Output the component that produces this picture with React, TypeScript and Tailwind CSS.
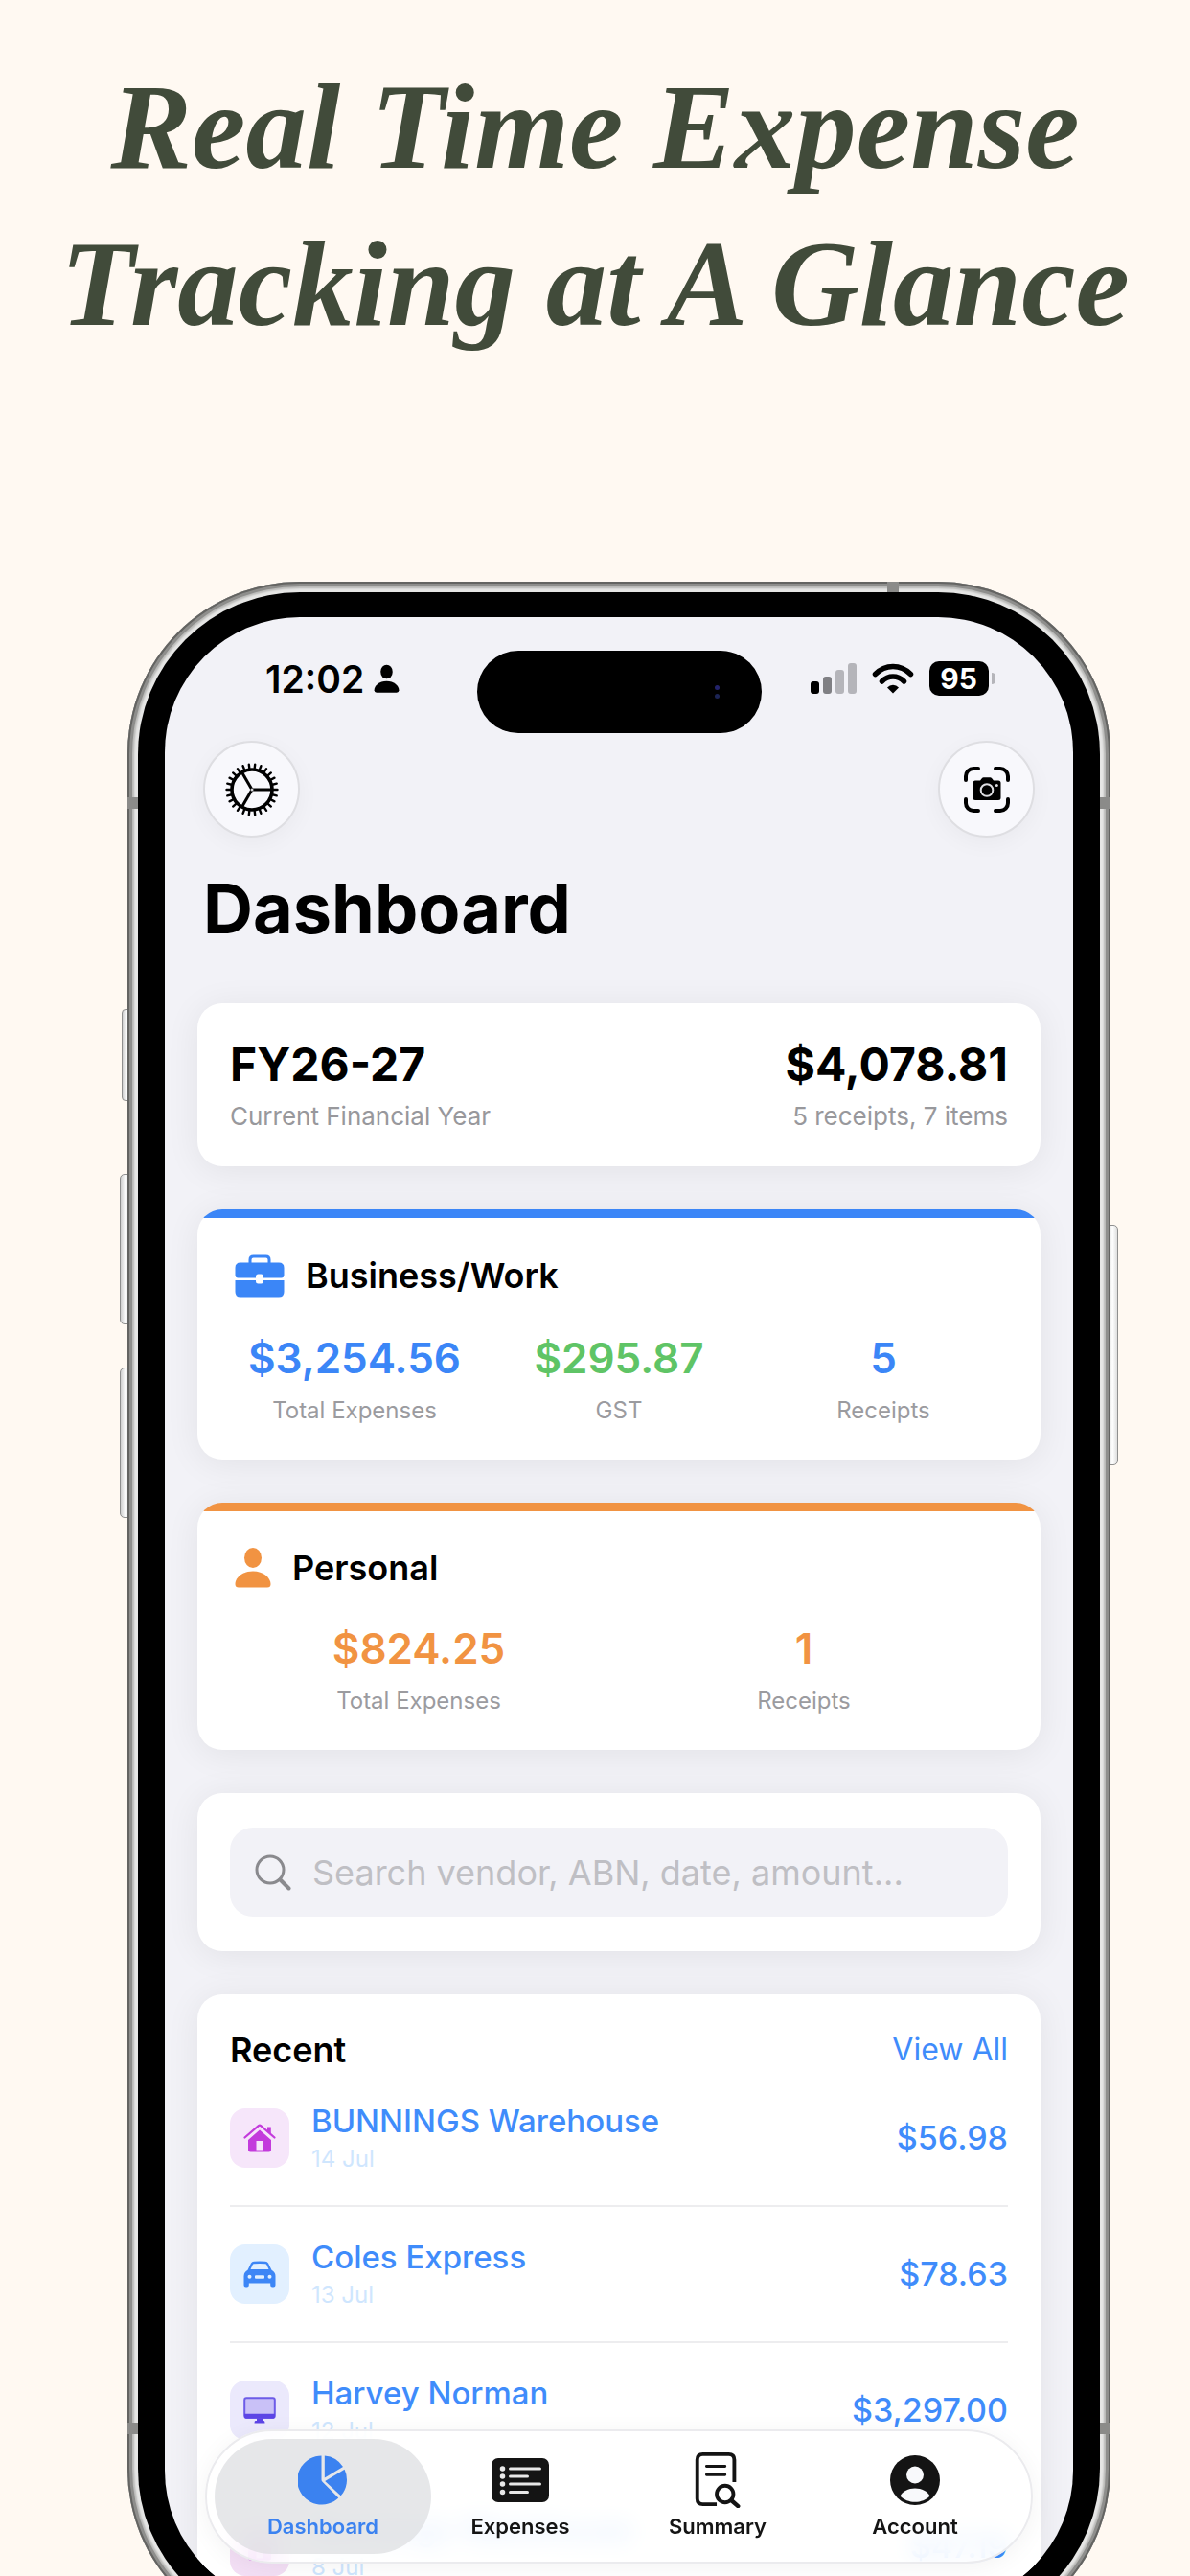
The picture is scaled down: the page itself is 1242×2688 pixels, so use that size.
import { FC, ReactNode } from 'react';
import clsx from 'clsx';

type IconProps = {
    className?: string;
};

const GEAR_TEETH = Array.from({ length: 26 }, (_, i) => (i * 360) / 26);

const GearIcon: FC<IconProps> = ({ className }) => (
    <svg viewBox="0 0 56 56" fill="none" stroke="currentColor" className={className} aria-hidden={true}>
        <circle cx="28" cy="28" r="21" strokeWidth="3.6" />
        {GEAR_TEETH.map((angle) => (
            <path key={angle} d="M49 28h5.5" strokeWidth="2.4" strokeLinecap="round" transform={`rotate(${angle} 28 28)`} />
        ))}
        {[0, 120, 240].map((angle) => (
            <path key={angle} d="M28 28h20" strokeWidth="3" transform={`rotate(${angle} 28 28)`} />
        ))}
        <circle cx="28" cy="28" r="1.5" fill="#d4d4d8" stroke="none" />
    </svg>
);

const ScanIcon: FC<IconProps> = ({ className }) => (
    <svg viewBox="0 0 48 48" fill="none" className={className} aria-hidden={true}>
        <path
            d="M2 14V10a8 8 0 0 1 8-8h5M33 2h5a8 8 0 0 1 8 8v4M46 34v4a8 8 0 0 1-8 8h-5M15 46h-5a8 8 0 0 1-8-8v-4"
            stroke="currentColor"
            strokeWidth="4"
            strokeLinecap="round"
        />
        <path
            d="M12 14.5h5l2-2.5q.6-.7 1.6-.7h6.8q1 0 1.6.7l2 2.5h5q2.5 0 2.5 2.5v15.5q0 2.5-2.5 2.5H12q-2.5 0-2.5-2.5V17q0-2.5 2.5-2.5z"
            fill="currentColor"
        />
        <circle cx="24" cy="24.5" r="6.3" stroke="#dcdce0" strokeWidth="2" />
        <circle cx="34.3" cy="19.5" r="1.5" fill="#dcdce0" />
    </svg>
);

const PersonIcon: FC<IconProps> = ({ className }) => (
    <svg viewBox="0 0 38 43" fill="currentColor" className={className} aria-hidden={true}>
        <ellipse cx="19" cy="11.5" rx="9" ry="10.5" />
        <path d="M4 42.5q-3.5 0-3.5-3.5C.5 32.5 8 25.5 19 25.5S37.5 32.5 37.5 39q0 3.5-3.5 3.5z" />
    </svg>
);

const BriefcaseIcon: FC<IconProps> = ({ className }) => (
    <svg viewBox="0 0 52 46" className={className} aria-hidden={true}>
        <path d="M16 10V6.5Q16 3 19.5 3h13Q36 3 36 6.5V10" fill="none" stroke="currentColor" strokeWidth="3" />
        <path
            d="M6 9.5h40q5.5 0 5.5 5.5v7.5q0 3-3 3H30V24q0-2.5-2.5-2.5h-3Q22 21.5 22 24v1.5H3.5q-3 0-3-3V15Q.5 9.5 6 9.5z"
            fill="currentColor"
        />
        <path d="M.5 28H22v1q0 2.5 2.5 2.5h3Q30 31.5 30 29v-1h21.5v12q0 5.5-5.5 5.5H6Q.5 45.5.5 40z" fill="currentColor" />
    </svg>
);

const SearchIcon: FC<IconProps> = ({ className }) => (
    <svg viewBox="0 0 38 38" fill="none" stroke="currentColor" strokeLinecap="round" className={className} aria-hidden={true}>
        <circle cx="16" cy="16" r="14" strokeWidth="3" />
        <path d="M26.5 26.5 35.5 35.5" strokeWidth="4" />
    </svg>
);

const HouseIcon: FC<IconProps> = ({ className }) => (
    <svg viewBox="0 0 34 30" fill="currentColor" className={className} aria-hidden={true}>
        <path d="M1.5 14.5 15.8 2.2q1.2-1 2.4 0L32.5 14.5" fill="none" stroke="currentColor" strokeWidth="2.2" strokeLinecap="round" />
        <path d="M25 3.5h3.8v8L25 8.2z" />
        <path d="M17 6.5 29 17v10q0 2.5-2.5 2.5h-19Q5 29.5 5 27V17zM13.5 18v9.500h7V18z" fillRule="evenodd" />
    </svg>
);

const CarIcon: FC<IconProps> = ({ className }) => (
    <svg viewBox="0 0 34 28" fill="currentColor" className={className} aria-hidden={true}>
        <path
            d="M8 2.5Q9 .8 11 .7q6-.5 12 0 2 .1 3 1.8l3.5 7.3Q33.5 12 33.5 16v9.5q0 2-2 2h-1.3q-2 0-2-2V23.5H5.8v2q0 2-2 2H2.5q-2 0-2-2V16q0-4 4-6.2zM9.8 4 7.5 9h19L24.2 4q-.4-.7-1.2-.8-6-.5-12 0-.8.1-1.2.8zM6.5 18.8a2 2 0 1 0 0-4 2 2 0 0 0 0 4zM27.5 18.8a2 2 0 1 0 0-4 2 2 0 0 0 0 4zM13 15.2q-1 0-1 1v1.6q0 1 1 1h8q1 0 1-1v-1.6q0-1-1-1z"
            fillRule="evenodd"
        />
    </svg>
);

const DisplayIcon: FC<IconProps> = ({ className }) => (
    <svg viewBox="0 0 34 28" className={className} aria-hidden={true}>
        <rect x="1.2" y="1.2" width="31.6" height="20.6" rx="2" fill="#c9c1f7" stroke="#6d5ce8" strokeWidth="2" />
        <path d="M1 17.8h32v2.4q0 2.6-2.6 2.6H3.6Q1 22.8 1 20.2z" fill="#5c45e6" />
        <path d="M14 22.5h6v2.5h1.5q1 0 1 2.5h-11q0-2.5 1-2.5H14z" fill="#5c45e6" />
    </svg>
);

const PieIcon: FC<IconProps> = ({ className }) => (
    <svg viewBox="0 0 52 52" fill="currentColor" className={className} aria-hidden={true}>
        <path d="M24.5.5V25.5q0 1.5 1 2.3L42.3 44.5A25.5 25.5 0 1 1 24.5.5z" />
        <path d="M27.8.5A25.5 25.5 0 0 1 47 12L27.8 23.5z" />
        <path d="M48.6 14.8A25.5 25.5 0 0 1 44.7 42.3L28.2 27z" />
    </svg>
);

const ListIcon: FC<IconProps> = ({ className }) => (
    <svg viewBox="0 0 60 48" className={className} aria-hidden={true}>
        <rect x="0" y="1" width="60" height="46" rx="7" fill="currentColor" />
        <g fill="none" stroke="#e8e8e8" strokeLinecap="round" strokeWidth="3">
            <path d="M19.5 12h31M19.5 20h18M19.5 28h31M19.5 36.5h18" />
            <path d="M11.5 12h.01M11.5 20h.01M11.5 28h.01M11.5 36.5h.01" strokeWidth="5.5" />
        </g>
    </svg>
);

const SummaryIcon: FC<IconProps> = ({ className }) => (
    <svg viewBox="0 0 48 60" fill="none" stroke="currentColor" className={className} aria-hidden={true}>
        <path d="M42 32V8q0-6-6-6H8Q2 2 2 8v42q0 6 6 6h15" strokeWidth="4" />
        <path d="M12 15h20M12 24h20" strokeWidth="3" strokeLinecap="round" />
        <circle cx="32" cy="45" r="9" strokeWidth="4" />
        <path d="M39 52l7 6" strokeWidth="4.5" strokeLinecap="round" />
    </svg>
);

const AccountIcon: FC<IconProps> = ({ className }) => (
    <svg viewBox="0 0 52 52" className={className} aria-hidden={true}>
        <circle cx="26" cy="26" r="26" fill="currentColor" />
        <circle cx="26" cy="20.5" r="9" fill="#f8f9fb" />
        <path d="M10.5 42.5C13 37.5 19 34.5 26 34.5s13 3 15.5 8C37.5 46.5 32 48.8 26 48.8s-11.5-2.3-15.5-6.3z" fill="#f8f9fb" />
    </svg>
);

const WifiIcon: FC<IconProps> = ({ className }) => (
    <svg viewBox="0 0 44 32" fill="none" stroke="currentColor" strokeWidth="5.5" className={className} aria-hidden={true}>
        <path d="M3.5 11.5Q11.5 3.5 22 3.5T40.5 11.5" strokeLinecap="round" />
        <path d="M10.5 19Q15.5 14 22 14T33.5 19" strokeLinecap="round" />
        <path d="M22 31.5l-6-6q2.5-2.8 6-2.8t6 2.8z" fill="currentColor" stroke="none" />
    </svg>
);

const StatusBar: FC = () => (
    <div className="grid grid-cols-[1fr_297px_1fr] items-start pt-[35px]">
        <div className="flex h-[58px] items-center gap-[10px] pl-[105px]">
            <span className="text-[39px] leading-none font-semibold">12:02</span>
            <PersonIcon className="h-[30px] w-[27px]" />
        </div>
        <div className="flex h-[86px] items-center justify-end rounded-full bg-black pr-11">
            <div className="flex flex-col gap-1">
                <span className="size-[5px] rounded-full bg-[#23236b]" />
                <span className="size-[5px] rounded-full bg-[#1c2454]" />
            </div>
        </div>
        <div className="flex h-[58px] items-center gap-4 pl-[51px]">
            <div className="flex items-end gap-1">
                <span className="h-[13px] w-[9px] rounded-[3px] bg-black" />
                <span className="h-[18px] w-[9px] rounded-[3px] bg-[#808084]" />
                <span className="h-[25px] w-[9px] rounded-[3px] bg-[#b5b5ba]" />
                <span className="h-[32px] w-[9px] rounded-[3px] bg-[#b5b5ba]" />
            </div>
            <WifiIcon className="h-[32px] w-[44px]" />
            <div className="flex items-center gap-[3px]">
                <span className="flex h-[36px] w-[62px] items-center justify-center rounded-[10px] bg-black text-[30px] leading-none font-bold text-white">
                    95
                </span>
                <span className="h-3 w-1 rounded-r-full bg-[#b5b5ba]" />
            </div>
        </div>
    </div>
);

type CardProps = {
    className?: string;
    children: ReactNode;
};

const Card: FC<CardProps> = ({ className, children }) => (
    <section className={clsx('overflow-hidden rounded-[26px] bg-white px-[34px] shadow-[0_4px_36px_rgba(0,0,0,0.07)]', className)}>
        {children}
    </section>
);

type StatProps = {
    value: string;
    label: string;
    color: string;
};

const Stat: FC<StatProps> = ({ value, label, color }) => (
    <div className="flex flex-col items-center gap-[14px]">
        <span className={clsx('text-[44px] leading-[52px] font-semibold', color)}>{value}</span>
        <span className="text-[24px] leading-[30px] text-[#9b9b9f]">{label}</span>
    </div>
);

type Expense = {
    vendor: string;
    date: string;
    amount: string;
    icon: ReactNode;
    tile: string;
};

const expenses: Expense[] = [
    {
        vendor: 'BUNNINGS Warehouse',
        date: '14 Jul',
        amount: '$56.98',
        icon: <HouseIcon className="w-[34px]" />,
        tile: 'bg-[#f6e6fa] text-[#c33bdc]',
    },
    {
        vendor: 'Coles Express',
        date: '13 Jul',
        amount: '$78.63',
        icon: <CarIcon className="w-[34px]" />,
        tile: 'bg-[#e2f0ff] text-[#3d86f6]',
    },
    {
        vendor: 'Harvey Norman',
        date: '12 Jul',
        amount: '$3,297.00',
        icon: <DisplayIcon className="w-[34px]" />,
        tile: 'bg-[#ebe9fc]',
    },
    {
        vendor: 'Bunnings Warehouse',
        date: '8 Jul',
        amount: '$47.19',
        icon: <HouseIcon className="w-[34px]" />,
        tile: 'bg-[#f3dff5] text-[#c33bdc]',
    },
];

const ExpenseRow: FC<{ expense: Expense }> = ({ expense }) => (
    <li className="border-b-2 border-[#ededef] last:border-b-0">
        <a href="#expense" className="flex h-[140px] items-center gap-[23px] text-[#3f8cfb]">
            <span className={clsx('flex size-[62px] shrink-0 items-center justify-center rounded-[16px]', expense.tile)}>
                {expense.icon}
            </span>
            <span className="flex flex-1 flex-col gap-1">
                <span className="text-[33px] leading-[40px] font-medium">{expense.vendor}</span>
                <span className="text-[24px] leading-[32px] text-[#cfe6fe]">{expense.date}</span>
            </span>
            <span className="text-[34px] leading-[40px] font-medium">{expense.amount}</span>
        </a>
    </li>
);

const tabs = [
    { label: 'Dashboard', icon: <PieIcon className="size-[52px]" />, active: true },
    { label: 'Expenses', icon: <ListIcon className="h-[48px] w-[60px]" />, active: false },
    { label: 'Summary', icon: <SummaryIcon className="h-[58px] w-[48px]" />, active: false },
    { label: 'Account', icon: <AccountIcon className="size-[52px]" />, active: false },
];

const TabBar: FC = () => (
    <nav className="absolute inset-x-[42px] bottom-[44px] flex h-[140px] rounded-full border-2 border-[#ebebee] bg-white/85 px-[18px] py-2 shadow-[0_4px_24px_rgba(0,0,0,0.05)] backdrop-blur-md">
        {tabs.map((tab) => (
            <button
                key={tab.label}
                type="button"
                aria-current={tab.active ? 'page' : undefined}
                className={clsx(
                    'relative flex flex-1 flex-col items-center',
                    tab.active ? 'text-[#3b82f0]' : 'text-[#141414]'
                )}
            >
                {tab.active && <span className="absolute -inset-x-[10px] inset-y-0 rounded-full bg-[#d9dadd]/65" />}
                <span className="relative flex h-[86px] items-center justify-center">{tab.icon}</span>
                <span className="relative -mt-2 text-[22px] leading-[26px] font-semibold">{tab.label}</span>
            </button>
        ))}
    </nav>
);

const roundButton =
    'flex size-[101px] items-center justify-center rounded-full border-2 border-[#dedee2] bg-[#f8f8fc] shadow-[0_6px_24px_rgba(0,0,0,0.04)]';

const Dashboard: FC = () => (
    <div className="relative h-full overflow-hidden rounded-[141px] bg-[#f2f2f7] text-black">
        <StatusBar />

        <header className="px-10 pt-2">
            <div className="flex justify-between">
                <button type="button" aria-label="Settings" className={roundButton}>
                    <GearIcon className="size-[56px]" />
                </button>
                <button type="button" aria-label="Scan receipt" className={roundButton}>
                    <ScanIcon className="size-[48px]" />
                </button>
            </div>
            <h2 className="mt-[29px] text-[72px] leading-[90px] font-bold">Dashboard</h2>
        </header>

        <main className="flex flex-col gap-[45px] px-[34px] pt-[54px]">
            <Card className="flex justify-between py-9">
                <div className="flex flex-col gap-[10px]">
                    <span className="text-[48px] leading-[56px] font-bold">FY26-27</span>
                    <span className="text-[26px] leading-[32px] text-[#98989c]">Current Financial Year</span>
                </div>
                <div className="flex flex-col gap-[10px] text-right">
                    <span className="text-[48px] leading-[56px] font-bold">$4,078.81</span>
                    <span className="text-[26px] leading-[32px] text-[#98989c]">5 receipts, 7 items</span>
                </div>
            </Card>

            <Card className="bg-linear-to-b from-[#3b86f7] from-[9px] to-white to-[9px] pt-[46px] pb-9">
                <h3 className="flex items-center gap-[22px] pl-[5px] text-[36px] leading-[40px] font-semibold">
                    <BriefcaseIcon className="h-[46px] w-[52px] text-[#3b86f7]" />
                    Business/Work
                </h3>
                <div className="mt-[37px] grid grid-cols-3 gap-4">
                    <Stat value="$3,254.56" label="Total Expenses" color="text-[#3b86f7]" />
                    <Stat value="$295.87" label="GST" color="text-[#5fc466]" />
                    <Stat value="5" label="Receipts" color="text-[#3b86f7]" />
                </div>
            </Card>

            <Card className="bg-linear-to-b from-[#f19342] from-[9px] to-white to-[9px] pt-[46px] pb-9">
                <h3 className="flex items-center gap-[22px] pl-[5px] text-[36px] leading-[40px] font-semibold">
                    <PersonIcon className="h-[43px] w-[38px] text-[#f19342]" />
                    Personal
                </h3>
                <div className="mt-[37px] grid grid-cols-2 gap-2 pr-4">
                    <Stat value="$824.25" label="Total Expenses" color="text-[#f19342]" />
                    <Stat value="1" label="Receipts" color="text-[#f19342]" />
                </div>
            </Card>

            <Card className="py-9">
                <label className="flex h-[93px] items-center gap-[22px] rounded-[24px] bg-[#f2f2f7] px-[26px]">
                    <SearchIcon className="size-[38px] shrink-0 text-[#8a8a8e]" />
                    <input
                        type="search"
                        aria-label="Search expenses"
                        placeholder="Search vendor, ABN, date, amount..."
                        className="w-full bg-transparent text-[36px] leading-[44px] outline-none placeholder:text-[#bfbfc4]"
                    />
                </label>
            </Card>

            <Card className="pt-9">
                <div className="flex items-center justify-between leading-[44px]">
                    <h3 className="text-[36px] font-semibold">Recent</h3>
                    <a href="#all" className="text-[32px] text-[#3f8cfb]">
                        View All
                    </a>
                </div>
                <ul>
                    {expenses.map((expense) => (
                        <ExpenseRow key={expense.date} expense={expense} />
                    ))}
                </ul>
            </Card>
        </main>

        <TabBar />
    </div>
);

const sideButton =
    'absolute border border-[#8f8f8f] bg-linear-to-r from-[#cfcfcf] via-white to-[#dedede]';

const Phone: FC = () => (
    <div className="relative h-[2149px] shrink-0">
        {/* hardware buttons */}
        <span className={clsx(sideButton, '-left-[6px] top-[446px] h-[96px] w-[10px] rounded-l-[4px]')} />
        <span className={clsx(sideButton, '-left-[8px] top-[618px] h-[157px] w-[12px] rounded-l-[5px]')} />
        <span className={clsx(sideButton, '-left-[8px] top-[820px] h-[157px] w-[12px] rounded-l-[5px]')} />
        <span className={clsx(sideButton, '-right-[8px] top-[671px] h-[251px] w-[12px] rounded-r-[5px]')} />

        <div className="relative h-full rounded-[180px] bg-[#e6e6e5] p-[11px] shadow-[inset_0_0_0_2px_#646462,inset_0_0_0_5px_#8e8e8c,inset_0_0_2px_7px_#b8b8b6]">
            {/* antenna bands */}
            <span className="absolute top-0 right-[221px] h-[11px] w-[12px] bg-[#8b8b89]" />
            <span className="absolute top-[225px] left-0 h-[12px] w-[11px] bg-[#8b8b89]" />
            <span className="absolute top-[225px] right-0 h-[12px] w-[11px] bg-[#8b8b89]" />
            <span className="absolute bottom-[216px] left-0 h-[12px] w-[11px] bg-[#8b8b89]" />
            <span className="absolute right-0 bottom-[216px] h-[12px] w-[11px] bg-[#8b8b89]" />
            <div className="h-full rounded-[169px] bg-black px-7 py-[26px]">
                <Dashboard />
            </div>
        </div>
    </div>
);

export default function App() {
    return (
        <div className="flex h-screen flex-col overflow-hidden bg-[#fff9f2] pr-[83px] pl-[133px] font-['Inter',sans-serif]">
            <h1 className="-mr-[83px] -ml-[133px] pt-[50px] text-center font-['Liberation_Serif',serif] text-[127px] leading-[164px] font-bold text-[#414b3a] italic">
                Real Time Expense
                <br />
                Tracking at A Glance
            </h1>
            <div className="pt-[229px]">
                <Phone />
            </div>
        </div>
    );
}
